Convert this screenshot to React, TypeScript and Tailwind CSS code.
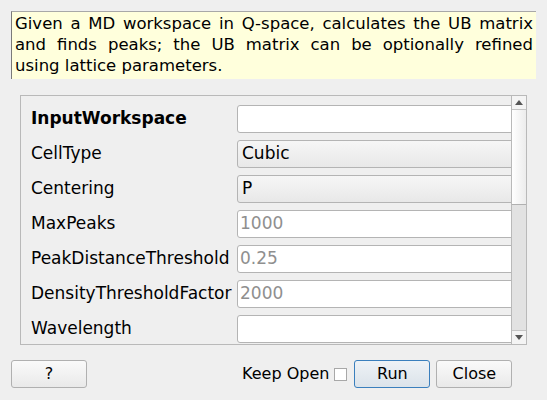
import React from "react";

const rows: { label: string; value?: string; kind: "text" | "combo"; placeholder?: boolean; bold?: boolean }[] = [
  { label: "InputWorkspace", kind: "text", bold: true },
  { label: "CellType", value: "Cubic", kind: "combo" },
  { label: "Centering", value: "P", kind: "combo" },
  { label: "MaxPeaks", value: "1000", kind: "text", placeholder: true },
  { label: "PeakDistanceThreshold", value: "0.25", kind: "text", placeholder: true },
  { label: "DensityThresholdFactor", value: "2000", kind: "text", placeholder: true },
  { label: "Wavelength", kind: "text" },
];

const descLines = [
  "Given a MD workspace in Q-space, calculates the UB matrix",
  "and finds peaks; the UB matrix can be optionally refined",
];

function Field({ row }: { row: (typeof rows)[number] }) {
  if (row.kind === "combo") {
    return (
      <div className="w-[290px] h-[28px] shrink-0 rounded-[3px] border border-[#b4b4b4] bg-gradient-to-b from-[#f6f6f6] to-[#e8e8e8] flex items-center px-[4px]">
        {row.value}
      </div>
    );
  }
  return (
    <div className="w-[290px] h-[28px] shrink-0 rounded-[3px] border border-[#b4b4b4] bg-white flex items-center px-[2px]">
      <span className={row.placeholder ? "text-[#8f8f8f]" : ""}>{row.value}</span>
    </div>
  );
}

export default function App() {
  return (
    <div className="w-[547px] h-[400px] bg-[#efefef] flex flex-col font-['DejaVu_Sans',sans-serif] text-[16px] text-black">
      {/* Description */}
      <div className="ml-[11px] mt-[11px] w-[525px] h-[68px] bg-[#ffffdc] border-t border-l border-t-[#a8a8a8] border-l-[#7a7a7a] pl-[3px] pr-[3px] pt-[1px] text-[16.5px] leading-[21px]">
        {descLines.map((l) => (
          <div key={l} className="text-justify [text-align-last:justify] whitespace-nowrap">{l}</div>
        ))}
        <div>using lattice parameters.</div>
      </div>

      {/* Property scroll area */}
      <div className="ml-[20px] mt-[16px] w-[507px] h-[250px] border border-[#b9b9b9] flex">
        <div className="flex-1 overflow-hidden pl-[10px] pt-[9px] flex flex-col gap-[7px] text-[17px]">
          {rows.map((row) => (
            <div key={row.label} className="flex items-center h-[28px] shrink-0">
              <div className={"w-[206px] shrink-0 whitespace-nowrap " + (row.bold ? "font-bold" : "")}>{row.label}</div>
              <Field row={row} />
            </div>
          ))}
        </div>
        {/* Scrollbar */}
        <div className="w-[15px] border-l border-[#b9b9b9] flex flex-col bg-[#e2e2e2]">
          <div className="h-[14px] bg-[#f4f4f4] border-b border-[#c4c4c4] flex items-center justify-center">
            <svg width="8" height="5" viewBox="0 0 8 5"><path d="M0 5 L4 0 L8 5 Z" fill="#555" /></svg>
          </div>
          <div className="h-[95px] bg-gradient-to-r from-[#ffffff] to-[#ececec] border-b border-[#b0b0b0]" />
          <div className="flex-1" />
          <div className="h-[14px] bg-[#f4f4f4] border-t border-[#c4c4c4] flex items-center justify-center">
            <svg width="8" height="5" viewBox="0 0 8 5"><path d="M0 0 L8 0 L4 5 Z" fill="#555" /></svg>
          </div>
        </div>
      </div>

      {/* Buttons */}
      <div className="mt-[15px] flex items-center h-[28px]">
        <button className="ml-[11px] w-[76px] h-[28px] rounded-[3px] border border-[#b0b0b0] bg-gradient-to-b from-[#fafafa] to-[#e9e9e9]">?</button>
        <span className="ml-[155px]">Keep Open</span>
        <span className="ml-[5px] w-[13px] h-[13px] border border-[#a8a8a8] bg-white" />
        <button className="ml-[7px] w-[76px] h-[28px] rounded-[3px] border border-[#3a7fbd] bg-gradient-to-b from-[#eef2f6] to-[#dbe3ea]">Run</button>
        <button className="ml-[6px] w-[76px] h-[28px] rounded-[3px] border border-[#b0b0b0] bg-gradient-to-b from-[#fafafa] to-[#e9e9e9]">Close</button>
      </div>
    </div>
  );
}
